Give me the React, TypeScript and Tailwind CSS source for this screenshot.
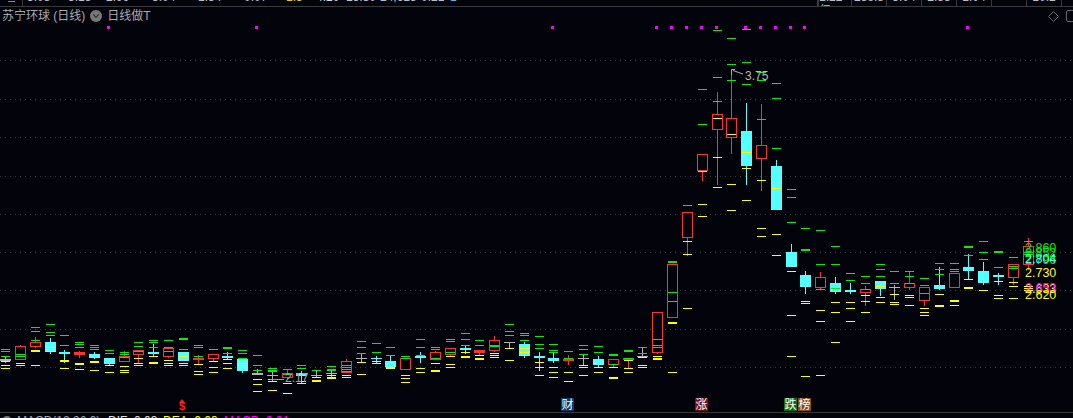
import { ChevronDown } from 'lucide-react';

type Kind = 'r' | 'c' | 'g';

interface Candle {
  x: number;
  kind: Kind;
  top: number;
  bot: number;
  wt: number;
  wb: number;
  green: number[];
  yellow: number[];
  greenThick?: number[];
  yellowThick?: number[];
}

const c = (
  x: number,
  kind: Kind,
  top: number,
  bot: number,
  wt: number,
  wb: number,
  green: number[],
  yellow: number[],
  greenThick: number[] = [],
  yellowThick: number[] = [],
): Candle => ({ x, kind, top, bot, wt, wb, green, yellow, greenThick, yellowThick });

const candles: Candle[] = [
  c(5, 'g', 359, 361, 357, 363, [349, 351, 356], [361, 365, 368]),
  c(20, 'r', 346, 360, 345, 360, [354, 356], [363, 365]),
  c(35, 'r', 342, 347, 337, 348, [327, 331, 340], [365], [], [350]),
  c(50, 'c', 342, 352, 338, 354, [324, 332, 335], [347, 349, 351]),
  c(64, 'c', 352, 354, 350, 363, [335, 345], [368], [], [360]),
  c(79, 'r', 352, 355, 351, 358, [342, 344, 347], [369], [], [363]),
  c(94, 'c', 354, 358, 352, 359, [345, 347, 349], [370], [], [361]),
  c(109, 'c', 358, 364, 358, 366, [350, 353], [365, 372]),
  c(124, 'r', 356, 362, 351, 362, [352, 354, 357], [366, 370, 372]),
  c(138, 'r', 350, 355, 350, 363, [342, 346, 351], [358, 363, 365]),
  c(153, 'c', 352, 354, 344, 356, [340, 342, 347], [356], [], [362]),
  c(168, 'r', 348, 357, 348, 358, [340, 347, 351], [360, 363, 365]),
  c(183, 'c', 352, 361, 352, 361, [349], [356, 363, 365], [338]),
  c(198, 'r', 358, 360, 355, 364, [345, 347, 356], [364, 371, 374]),
  c(213, 'r', 354, 359, 354, 361, [349], [361, 367, 372]),
  c(227, 'c', 356, 358, 352, 360, [353], [359, 363, 368], [347]),
  c(242, 'c', 359, 371, 359, 373, [350, 353, 358], [363, 365, 367]),
  c(257, 'g', 373, 375, 369, 375, [355, 365, 370], [379, 384, 391]),
  c(272, 'g', 375, 376, 370, 381, [368], [379, 381, 390], [370]),
  c(287, 'r', 373, 378, 369, 380, [369, 374], [383, 393]),
  c(301, 'c', 373, 376, 371, 383, [365, 368], [381, 383]),
  c(316, 'g', 375, 376, 370, 378, [370], [377], [], [380]),
  c(331, 'g', 373, 374, 370, 378, [366], [375], [369], [377]),
  c(346, 'r', 361, 373, 359, 373, [365, 367, 369, 371], [375, 377]),
  c(361, 'g', 358, 359, 353, 363, [341, 347, 353], [362, 374]),
  c(376, 'c', 358, 359, 356, 363, [343, 352], [361, 363]),
  c(390, 'c', 361, 367, 355, 367, [347, 355], [], [], [367]),
  c(405, 'r', 358, 370, 358, 370, [356, 358], [375, 378, 382]),
  c(420, 'c', 356, 358, 352, 363, [339, 347, 355], [368, 372]),
  c(435, 'r', 352, 360, 351, 360, [347, 349, 358], [363], [], [370]),
  c(450, 'r', 348, 355, 348, 356, [339, 341, 352], [356, 364, 367]),
  c(465, 'c', 348, 350, 345, 354, [333, 339, 345], [352], [], [356]),
  c(479, 'r', 350, 353, 350, 355, [340, 345], [355], [], [358]),
  c(494, 'r', 340, 351, 336, 352, [345, 346], [353, 355, 357]),
  c(509, 'g', 342, 343, 342, 348, [324, 331, 335], [348, 360]),
  c(524, 'c', 344, 356, 342, 358, [333, 335, 340], [348, 352]),
  c(539, 'c', 356, 358, 352, 371, [336, 344, 348], [362, 367, 375]),
  c(553, 'c', 358, 361, 353, 363, [344, 350, 352], [367, 372, 377]),
  c(568, 'r', 359, 361, 355, 365, [351, 358], [372, 381]),
  c(583, 'g', 358, 359, 354, 365, [345, 349, 354], [365, 367, 375]),
  c(598, 'c', 359, 365, 356, 367, [346, 352], [363, 367, 372]),
  c(613, 'r', 359, 365, 359, 367, [364], [367], [354], [377]),
  c(628, 'r', 358, 360, 358, 368, [358], [360, 368, 372], [350]),
  c(642, 'g', 356, 357, 347, 357, [347, 353], [357, 365, 367]),
  c(657, 'r', 312, 353, 312, 354, [339, 345, 347], [356], [], [358]),
  c(672, 'r', 264, 318, 264, 318, [292, 301], [372], [261], [322]),
  c(687, 'r', 212, 238, 212, 256, [205], [241, 254, 308]),
  c(702, 'r', 154, 171, 154, 181, [89, 124], [171, 204, 216]),
  c(717, 'r', 114, 130, 92, 185, [30, 77, 101], [118, 157, 187]),
  c(731, 'r', 118, 138, 72, 154, [38, 64, 80], [134, 184, 210]),
  c(746, 'c', 131, 166, 103, 185, [29, 62, 84], [152, 168, 200]),
  c(761, 'r', 145, 159, 104, 191, [72, 80, 119], [180, 228, 236]),
  c(776, 'c', 166, 210, 160, 210, [83, 98, 148], [188, 234, 255]),
  c(791, 'c', 252, 267, 244, 267, [189, 197, 222], [271, 315, 356]),
  c(805, 'c', 275, 287, 271, 294, [228], [301, 303, 376], [249]),
  c(820, 'r', 277, 288, 272, 290, [230, 264, 289], [310, 321, 375]),
  c(835, 'c', 283, 292, 277, 294, [246, 264, 288], [302, 312, 342]),
  c(850, 'c', 290, 292, 283, 294, [273, 280], [302, 308, 321]),
  c(865, 'r', 289, 293, 286, 306, [276, 283, 289], [295, 301, 312]),
  c(880, 'c', 281, 289, 281, 296, [264, 269, 276], [286, 297, 302]),
  c(894, 'g', 287, 288, 285, 300, [271, 283], [294, 302, 304]),
  c(909, 'r', 283, 288, 271, 290, [271, 276, 283], [295, 297, 305]),
  c(924, 'r', 287, 301, 287, 306, [278, 285, 293], [308, 312, 315]),
  c(939, 'c', 285, 289, 267, 290, [263, 269, 274], [294], [], [305]),
  c(954, 'r', 273, 288, 273, 288, [263, 269, 271], [305], [], [300]),
  c(968, 'c', 267, 271, 254, 279, [255], [279], [246], [287]),
  c(983, 'c', 271, 283, 262, 285, [241, 252, 259], [281, 290]),
  c(998, 'c', 275, 277, 273, 285, [267], [281, 295, 298], [251]),
  c(1013, 'r', 264, 278, 264, 285, [257, 266, 268], [282, 286, 298]),
  c(1028, 'r', 246, 265, 238, 270, [241, 252, 254], [286, 288, 290]),
];

const signals = [107, 255, 551, 655, 670, 685, 700, 715, 744, 759, 774, 789, 803, 966];
const gridLines = [60, 99, 137, 176, 214, 252, 290, 329, 367];

const RED = '#ff3232';
const CYAN = '#54ffff';
const GRAY = '#b4b4b4';
const GREEN = '#00f000';
const YELLOW = '#ffff00';

function CandleMark({ d }: { d: Candle }) {
  const color = d.kind === 'r' ? RED : d.kind === 'c' ? CYAN : GRAY;
  const h = d.bot - d.top;
  const hollow = d.kind === 'r' && h > 3;
  return (
    <g>
      <rect x={d.x} y={d.wt} width={1} height={d.wb - d.wt} fill={color} />
      {hollow ? (
        <rect x={d.x - 4.5} y={d.top + 0.5} width={10} height={h - 1} fill="#03030b" stroke={color} />
      ) : (
        <rect x={d.x - 5} y={d.top} width={11} height={h} fill={color} />
      )}
      {d.green.map((y) => (
        <rect key={`g${y}`} x={d.x - 4} y={y} width={9} height={1} fill={GREEN} />
      ))}
      {d.greenThick?.map((y) => (
        <rect key={`G${y}`} x={d.x - 4} y={y} width={9} height={2} fill={GREEN} />
      ))}
      {d.yellow.map((y) => (
        <rect key={`y${y}`} x={d.x - 4} y={y} width={9} height={1} fill={YELLOW} />
      ))}
      {d.yellowThick?.map((y) => (
        <rect key={`Y${y}`} x={d.x - 4} y={y} width={9} height={2} fill={YELLOW} />
      ))}
    </g>
  );
}

function Chart() {
  return (
    <svg
      className="absolute inset-0 h-full w-full"
      viewBox="0 7 1073 405"
      shapeRendering="crispEdges"
    >
      {gridLines.map((y) => (
        <line key={y} x1={0} x2={1073} y1={y + 0.5} y2={y + 0.5} stroke="#3c3c3c" strokeDasharray="1 4" />
      ))}
      {signals.map((x) => (
        <rect key={x} x={x} y={26} width={3} height={3} fill="#ff00ff" />
      ))}
      {candles.map((d) => (
        <CandleMark key={d.x} d={d} />
      ))}
      <path d="M731.5 75V69.5H735M733 70.5L743 74" fill="none" stroke="#b0b0b0" shapeRendering="auto" />
      <path d="M270 379.5H284" fill="none" stroke="#9a9a9a" />
    </svg>
  );
}

function TopBar() {
  return (
    <div className="flex h-[7px] shrink-0 overflow-hidden border-b border-[#3a3a3a] text-[12px] leading-[14px] text-[#b8c0c8]">
      <div className="flex w-[23px] shrink-0 justify-center border-r border-[#3a3a3a]">
        <div className="mt-[1px] h-[1px] w-[7px] bg-[#888]" />
      </div>
      <div className="-mt-[10px] flex w-[794px] shrink-0 pl-[4px]">
        <span className="w-[41px]">3.08</span>
        <span className="w-[38px]">3.15</span>
        <span className="w-[46px]">2.99</span>
        <span className="w-[46px]">3.04</span>
        <span className="w-[46px]">1.34</span>
        <span className="w-[35px]">0.07</span>
        <span className="w-[30px] text-[#e0d000]">+1.5</span>
        <span className="w-[37px] text-[#d0d8e0]">+4.20</span>
        <span className="w-[34px]">15.30</span>
        <span className="w-[41px]">24,615</span>
        <span className="w-[29px]">0.21</span>
        <span className="text-[#6ab0e0]">1</span>
      </div>
      <div className="-mt-[10px] flex w-[35px] shrink-0 justify-center border-l-2 border-r border-[#3a3a3a]">1.22亿</div>
      <div className="-mt-[10px] flex w-[35px] shrink-0 justify-center border-r border-[#3a3a3a]">236.8</div>
      <div className="-mt-[10px] flex w-[35px] shrink-0 justify-center border-r border-[#3a3a3a]">3.04</div>
      <div className="-mt-[10px] flex w-[35px] shrink-0 justify-center border-r border-[#3a3a3a]">2.88</div>
      <div className="-mt-[10px] flex w-[35px] shrink-0 justify-center border-r border-[#3a3a3a]">1.04</div>
      <div className="-mt-[10px] flex w-[35px] shrink-0 justify-center border-r border-[#3a3a3a]" />
      <div className="-mt-[10px] flex w-[35px] shrink-0 justify-center border-r border-[#3a3a3a]">10.2</div>
    </div>
  );
}

function Tag({ className, label }: { className: string; label: string }) {
  return (
    <span
      className={`flex h-[13px] w-[13px] items-center justify-center text-[12px] leading-none text-white ${className}`}
    >
      {label}
    </span>
  );
}

export default function App() {
  return (
    <div className="flex h-[418px] w-[1073px] flex-col overflow-hidden bg-[#03030b] font-['Liberation_Sans','Noto_Sans_CJK_SC',sans-serif]">
      <TopBar />

      <div className="relative h-[405px] shrink-0">
        <Chart />

        {/* title row */}
        <div className="relative flex h-[18px] items-center justify-between pl-[2px] text-[12px] text-[#aaaaaa]">
          <div className="flex items-center">
            <span>苏宁环球 (日线)</span>
            <span className="ml-[5px] flex h-[12px] w-[12px] items-center justify-center rounded-full bg-[#777777]">
              <ChevronDown size={10} strokeWidth={2.5} className="text-[#1a1a1a]" />
            </span>
            <span className="ml-[5px]">日线做T</span>
          </div>
          <div className="flex items-center">
            <svg width="11" height="11" viewBox="0 0 11 11" className="mr-[7px]">
              <path d="M5.5 0.5L10.5 5.5L5.5 10.5L0.5 5.5Z" fill="none" stroke="#666666" />
            </svg>
            <span className="h-[12px] w-[12px] -mr-[5px] rounded-[2px] border border-[#666666]" />
          </div>
        </div>

        {/* price annotations */}
        <span className="absolute left-[745px] top-[62px] text-[12px] leading-[14px] text-[#b8b8b8]">3.75</span>
        <span className="absolute left-[285px] top-[364px] text-[12px] leading-[14px] text-[#a0a0a0]">2.17</span>

        {/* last value labels */}
        <span className="absolute left-[1025px] top-[234px] text-[12.5px] leading-[14px] text-[#00f000]">2.860</span>
        <span className="absolute left-[1025px] top-[239px] text-[12.5px] leading-[14px] text-[#00f000]">2.852</span>
        <span className="absolute left-[1025px] top-[246px] text-[12.5px] leading-[14px] text-[#00f000]">2.796</span>
        <span className="absolute left-[1025px] top-[245px] text-[12.5px] leading-[14px] text-[#54ffff]">2.804</span>
        <span className="absolute left-[1025px] top-[259px] text-[12.5px] leading-[14px] text-[#ffff00]">2.730</span>
        <span className="absolute left-[1025px] top-[275px] text-[12.5px] leading-[14px] text-[#ffff00]">2.633</span>
        <span className="absolute left-[1025px] top-[274px] text-[12.5px] leading-[14px] text-[#ff00ff]">2.653</span>
        <span className="absolute left-[1025px] top-[281px] text-[12.5px] leading-[14px] text-[#ffff00]">2.620</span>

        {/* event tags */}
        <span className="absolute left-[179px] top-[392px] flex flex-col items-center text-[#ff2020]">
          <span className="h-0 w-0 border-x-[3px] border-b-[4px] border-x-transparent border-b-[#ff2020]" />
          <span className="-mt-[1px] text-[11px] font-bold leading-[9px]">$</span>
        </span>
        <Tag className="absolute left-[561px] top-[391px] bg-[#0b3b6e]" label="财" />
        <Tag className="absolute left-[695px] top-[391px] bg-[#7a0c12]" label="涨" />
        <Tag className="absolute left-[784px] top-[391px] bg-[#0c6e14]" label="跌" />
        <Tag className="absolute left-[798px] top-[391px] bg-[#8a4a10]" label="榜" />
      </div>

      {/* indicator strip, cut off by the window */}
      <div className="flex shrink-0 items-start overflow-hidden border-t border-[#3a3a3a] pl-[2px] pt-[1px] text-[12px] leading-[14px]">
        <span className="mr-[5px] mt-[2px] h-[10px] w-[10px] rounded-full bg-[#777777]" />
        <span className="w-[91px] text-[#a0a8b8]">MACD(12,26,9)</span>
        <span className="w-[55px] text-[#e0e0e0]">DIF: 0.03</span>
        <span className="w-[61px] text-[#ffff00]">DEA: 0.03</span>
        <span className="text-[#ff00ff]">MACD: 0.01</span>
      </div>
    </div>
  );
}
